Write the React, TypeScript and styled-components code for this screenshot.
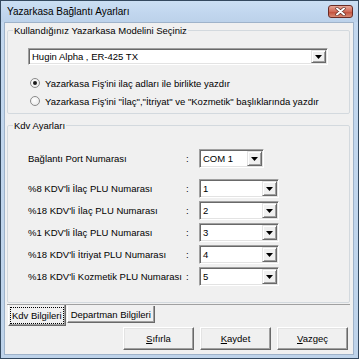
import styled, { createGlobalStyle } from "styled-components";

const GlobalStyle = createGlobalStyle`
  * { box-sizing: border-box; }
  body {
    margin: 0;
    background: #fff;
    font-family: "Liberation Sans", Arial, sans-serif;
    font-size: 9.5px;
    color: #000;
  }
`;

const Window = styled.div`
  width: 359px;
  height: 359px;
  display: flex;
  flex-direction: column;
  border: 1px solid #34495f;
  background: linear-gradient(#c3d8ef, #bed3ea);
`;

const TitleBar = styled.div`
  height: 21px;
  display: flex;
  align-items: center;
  padding: 0 5px 0 6px;
  font-size: 10px;
  background: linear-gradient(#cbdff3, #c1d6ee 60%, #bcd2ea);
`;

const Title = styled.span`
  flex: 1;
`;

const CloseButton = styled.div`
  width: 25px;
  height: 13px;
  border: 1px solid #6a2b24;
  border-radius: 3px;
  background: linear-gradient(#e8a898, #d06a58 50%, #bf4a36 51%, #d98a74);
  display: flex;
  align-items: center;
  justify-content: center;
`;

const Frame = styled.div`
  flex: 1;
  display: flex;
  padding: 0 4px 3px 3px;
`;

const Client = styled.div`
  flex: 1;
  display: flex;
  flex-direction: column;
  background: #f0f0f0;
  border: 1px solid #9fb3ca;
  padding: 2px 3px 4px 2px;
`;

const Group = styled.fieldset`
  margin: 0;
  padding: 0;
  min-width: 0;
  border: 1px solid #d3d9de;
  border-radius: 2px;
`;

const Legend = styled.legend`
  margin-left: 5px;
  padding: 0 1px;
  line-height: 11px;
  font-size: 9.5px;
`;

const ModelBody = styled.div`
  display: flex;
  flex-direction: column;
  padding: 12px 21px 5px 20px;
`;

const ComboBox = styled.div<{ $width?: number; $height: number }>`
  width: ${(p) => (p.$width ? `${p.$width}px` : "100%")};
  height: ${(p) => p.$height}px;
  display: flex;
  background: #fff;
  border: 1px solid;
  border-color: #a0a0a0 #fff #fff #a0a0a0;
  box-shadow: inset 1px 1px #696969, inset -1px -1px #e3e3e3;
  padding: 1px;
`;

const ComboText = styled.span`
  flex: 1;
  display: flex;
  align-items: center;
  padding-left: 2px;
  white-space: nowrap;
`;

const DropButton = styled.span`
  width: 15px;
  display: flex;
  align-items: center;
  justify-content: center;
  background: #f0f0f0;
  border: 1px solid;
  border-color: #e3e3e3 #696969 #696969 #e3e3e3;
  box-shadow: inset 1px 1px #fff, inset -1px -1px #a0a0a0;
`;

const RadioList = styled.div`
  display: flex;
  flex-direction: column;
  gap: 4px;
  margin-top: 11px;
`;

const RadioRow = styled.label`
  height: 14px;
  display: flex;
  align-items: center;
  gap: 5px;
  padding-left: 2px;
  white-space: nowrap;
`;

const RadioDot = styled.span<{ $checked?: boolean }>`
  width: 10px;
  height: 10px;
  border-radius: 50%;
  border: 1px solid #8a8a8a;
  background: radial-gradient(circle at 40% 40%, #fff, #e4e4e4);
  display: flex;
  align-items: center;
  justify-content: center;
  &::after {
    content: "";
    width: 4px;
    height: 4px;
    border-radius: 50%;
    background: ${(p) => (p.$checked ? "#1a1a1a" : "transparent")};
  }
`;

const TabPage = styled.div`
  margin-top: 6px;
  padding-bottom: 1px;
  border-bottom: 1px solid #a0a0a0;
`;

const KdvBody = styled.div`
  padding: 18px 0 16px 20px;
`;

const FieldRow = styled.div`
  height: 19px;
  display: grid;
  grid-template-columns: 158px 13px auto;
  align-items: center;
  white-space: nowrap;
`;

const PortRow = styled(FieldRow)`
  margin-bottom: 11px;
`;

const FieldList = styled.div`
  display: flex;
  flex-direction: column;
  gap: 3px;
`;

const TabStrip = styled.div`
  height: 21px;
  display: flex;
  align-items: flex-start;
  padding-left: 1px;
`;

const Tab = styled.div<{ $active?: boolean }>`
  height: ${(p) => (p.$active ? 21 : 17)}px;
  margin-top: ${(p) => (p.$active ? 0 : 1)}px;
  padding: 0 ${(p) => (p.$active ? 1 : 3)}px;
  display: flex;
  align-items: center;
  background: #f0f0f0;
  border: 1px solid;
  border-top: none;
  border-color: #fff #696969 #696969 #fff;
  box-shadow: inset -1px -1px #a0a0a0;
  margin-right: ${(p) => (p.$active ? 1 : 0)}px;
  white-space: nowrap;
`;

const FocusText = styled.span`
  padding: 1px 1px;
  border: 1px dotted #000;
  line-height: 13px;
`;

const ButtonRow = styled.div`
  display: flex;
  justify-content: flex-end;
  gap: 6px;
  margin-top: 1px;
  padding-right: 2px;
`;

const Button = styled.div`
  width: 71px;
  height: 23px;
  display: flex;
  align-items: center;
  justify-content: center;
  background: #f0f0f0;
  border: 1px solid;
  border-color: #fff #696969 #696969 #fff;
  box-shadow: inset -1px -1px #a0a0a0, inset 1px 1px #e3e3e3;
`;

const Arrow = () => (
  <svg width="7" height="4" viewBox="0 0 7 4">
    <path d="M0 0H7L3.5 4Z" fill="#000" />
  </svg>
);

const Combo = ({ value, width, height }: { value: string; width?: number; height: number }) => (
  <ComboBox $width={width} $height={height}>
    <ComboText>{value}</ComboText>
    <DropButton>
      <Arrow />
    </DropButton>
  </ComboBox>
);

const fields = [
  { label: "%8 KDV'li İlaç PLU Numarası", value: "1" },
  { label: "%18 KDV'li İlaç PLU Numarası", value: "2" },
  { label: "%1 KDV'li İlaç PLU Numarası", value: "3" },
  { label: "%18 KDV'li İtriyat PLU Numarası", value: "4" },
  { label: "%18 KDV'li Kozmetik PLU Numarası", value: "5" },
];

export default function App() {
  return (
    <>
      <GlobalStyle />
      <Window>
        <TitleBar>
          <Title>Yazarkasa Bağlantı Ayarları</Title>
          <CloseButton>
            <svg width="11" height="9" viewBox="0 0 11 9">
              <path d="M2 1.5L9 7.5M9 1.5L2 7.5" stroke="#5a2a22" strokeWidth="3.2" strokeLinecap="round" />
              <path d="M2 1.5L9 7.5M9 1.5L2 7.5" stroke="#fff" strokeWidth="2" strokeLinecap="round" />
            </svg>
          </CloseButton>
        </TitleBar>
        <Frame>
          <Client>
            <Group>
              <Legend>Kullandığınız Yazarkasa Modelini Seçiniz</Legend>
              <ModelBody>
                <Combo value="Hugin Alpha , ER-425 TX" height={17} />
                <RadioList>
                  <RadioRow>
                    <RadioDot $checked />
                    Yazarkasa Fiş'ini ilaç adları ile birlikte yazdır
                  </RadioRow>
                  <RadioRow>
                    <RadioDot />
                    Yazarkasa Fiş'ini "İlaç","İtriyat" ve "Kozmetik" başlıklarında yazdır
                  </RadioRow>
                </RadioList>
              </ModelBody>
            </Group>
            <TabPage>
              <Group>
                <Legend>Kdv Ayarları</Legend>
                <KdvBody>
                  <PortRow>
                    <span>Bağlantı Port Numarası</span>
                    <span>:</span>
                    <Combo value="COM 1" width={65} height={19} />
                  </PortRow>
                  <FieldList>
                    {fields.map((f) => (
                      <FieldRow key={f.label}>
                        <span>{f.label}</span>
                        <span>:</span>
                        <Combo value={f.value} width={80} height={19} />
                      </FieldRow>
                    ))}
                  </FieldList>
                </KdvBody>
              </Group>
            </TabPage>
            <TabStrip>
              <Tab $active>
                <FocusText>Kdv Bilgileri</FocusText>
              </Tab>
              <Tab>Departman Bilgileri</Tab>
            </TabStrip>
            <ButtonRow>
              <Button>
                <span><u>S</u>ıfırla</span>
              </Button>
              <Button>
                <span><u>K</u>aydet</span>
              </Button>
              <Button>
                <span><u>V</u>azgeç</span>
              </Button>
            </ButtonRow>
          </Client>
        </Frame>
      </Window>
    </>
  );
}
